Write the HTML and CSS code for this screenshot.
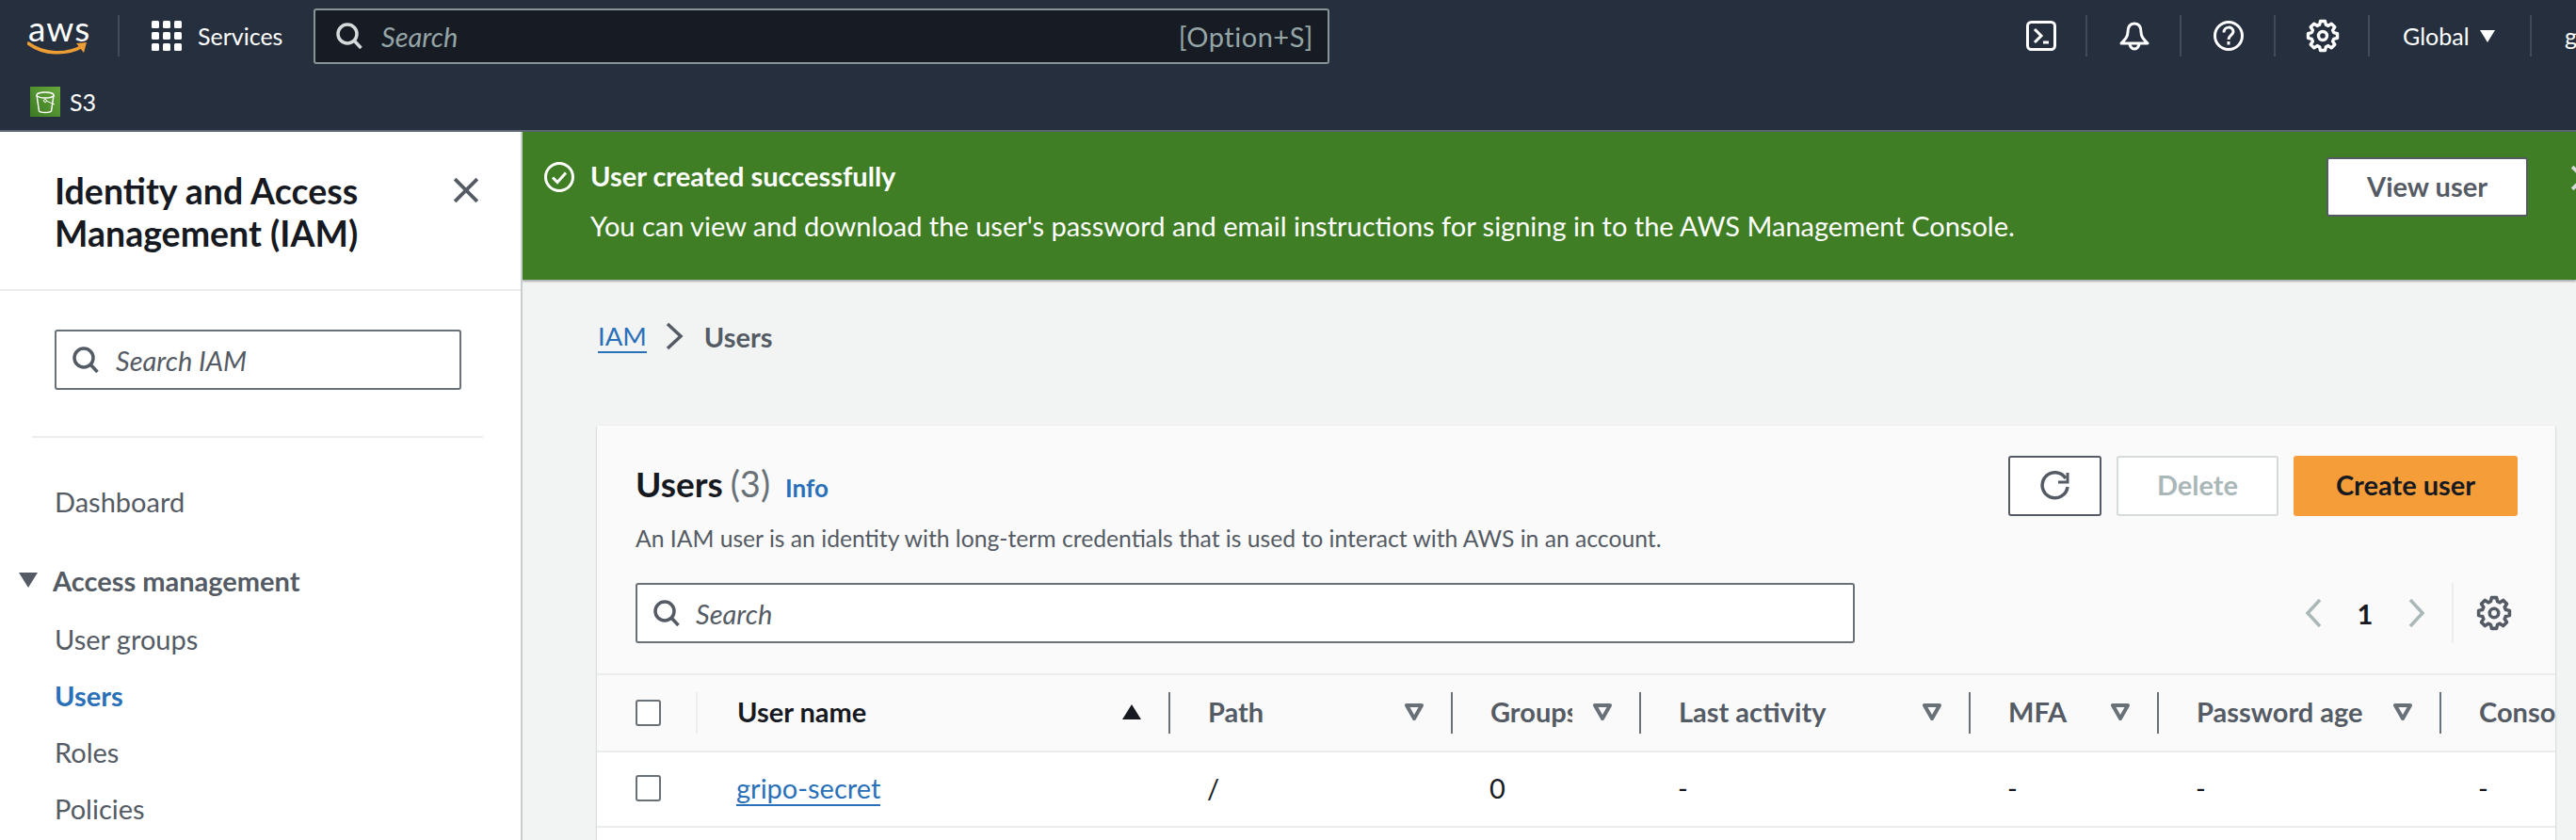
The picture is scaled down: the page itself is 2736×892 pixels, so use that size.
FILE: index.html
```html
<!DOCTYPE html>
<html lang="en">
<head>
    <meta charset="UTF-8">
    <title>Users | IAM</title>
    <link rel="stylesheet" href="styles.css">
</head>
<body>
    <svg class="sprites" width="0" height="0">
        <symbol id="gear" viewBox="0 0 16 16">
            <path d="M6.9 1.1H9.1L9.5 2.8 10.6 3.3 12.1 2.3 13.7 3.9 12.7 5.4 13.2 6.5 14.9 6.9V9.1L13.2 9.5 12.7 10.6 13.7 12.1 12.1 13.7 10.6 12.7 9.5 13.2 9.1 14.9H6.9L6.5 13.2 5.4 12.7 3.9 13.7 2.3 12.1 3.3 10.6 2.8 9.5 1.1 9.1V6.9L2.8 6.5 3.3 5.4 2.3 3.9 3.9 2.3 5.4 3.3 6.5 2.8Z" fill="none" stroke="currentColor" stroke-width="1.5" stroke-linejoin="round"/>
            <circle cx="8" cy="8" r="2" fill="none" stroke="currentColor" stroke-width="1.5"/>
        </symbol>
        <symbol id="search" viewBox="0 0 28 28">
            <circle cx="12" cy="12" r="10" fill="none" stroke="currentColor" stroke-width="3.5"/>
            <path d="M19 19l7.500 8" fill="none" stroke="currentColor" stroke-width="3.5"/>
        </symbol>
        <symbol id="filter" viewBox="0 0 20 18">
            <path d="M2 2h16L10 16z" fill="none" stroke="currentColor" stroke-width="4" stroke-linejoin="round"/>
        </symbol>
    </svg>

    <header class="top-nav">
        <div class="nav-main">
            <a class="aws-logo">
                <span class="aws-word">aws</span>
                <svg class="aws-smile" viewBox="0 0 64 16">
                    <path d="M1 2c16 12 40 13 58 3" fill="none" stroke="#ec9d34" stroke-width="3.5" stroke-linecap="round"/>
                    <path d="M52 2l11-1-3 11z" fill="#ec9d34"/>
                </svg>
            </a>
            <a class="services">
                <svg class="grid-icon" viewBox="0 0 32 32" fill="#fff">
                    <rect x="0" y="0" width="8" height="8" rx="1.5"/><rect x="12" y="0" width="8" height="8" rx="1.5"/><rect x="24" y="0" width="8" height="8" rx="1.5"/>
                    <rect x="0" y="12" width="8" height="8" rx="1.5"/><rect x="12" y="12" width="8" height="8" rx="1.5"/><rect x="24" y="12" width="8" height="8" rx="1.5"/>
                    <rect x="0" y="24" width="8" height="8" rx="1.5"/><rect x="12" y="24" width="8" height="8" rx="1.5"/><rect x="24" y="24" width="8" height="8" rx="1.5"/>
                </svg>
                Services
            </a>
            <div class="nav-search">
                <svg class="nav-search-icon"><use href="#search"/></svg>
                <span class="nav-search-text">Search</span>
                <span class="nav-search-key">[Option+S]</span>
            </div>
            <div class="nav-right">
                <div class="nav-cell nav-first">
                    <svg class="nav-icon" viewBox="0 0 32 32" fill="none" stroke="#fff" stroke-width="3">
                        <rect x="1.5" y="1.5" width="29" height="29" rx="4"/>
                        <path d="M9 9l7 7-7 7M18 23h6"/>
                    </svg>
                </div>
                <div class="nav-cell">
                    <svg class="nav-icon" viewBox="0 0 32 32" fill="none" stroke="#fff" stroke-width="3" stroke-linejoin="round">
                        <path d="M16 3c5 0 7 4 7 9 0 5 3 8 7 12H2c4-4 7-7 7-12 0-5 2-9 7-9z"/>
                        <path d="M11 24a5 6 0 0 0 10 0"/>
                    </svg>
                </div>
                <div class="nav-cell">
                    <svg class="nav-icon" viewBox="0 0 32 32" fill="none" stroke="#fff" stroke-width="3">
                        <circle cx="16" cy="16" r="14.5"/>
                        <path d="M11 12.500c0-7 10-7 10-1 0 4-5 4-5 8.500"/>
                        <path d="M16 22v3.500"/>
                    </svg>
                </div>
                <div class="nav-cell">
                    <svg class="nav-gear"><use href="#gear"/></svg>
                </div>
                <div class="nav-cell nav-region">Global <span class="nav-caret"></span></div>
                <div class="nav-user">gripo</div>
            </div>
        </div>
        <div class="nav-sub">
            <svg class="s3-icon" viewBox="0 0 32 32">
                <defs>
                    <linearGradient id="s3bg" x1="0" y1="1" x2="1" y2="0">
                        <stop offset="0" stop-color="#3b7a22"/>
                        <stop offset="1" stop-color="#68a83c"/>
                    </linearGradient>
                </defs>
                <rect width="32" height="32" fill="url(#s3bg)"/>
                <path d="M7 9l2.500 17c2 2 11 2 13 0L25 9" fill="none" stroke="#fff" stroke-width="1.500"/>
                <ellipse cx="16" cy="9" rx="9" ry="3" fill="none" stroke="#fff" stroke-width="1.500"/>
                <circle cx="16" cy="15" r="1.500" fill="none" stroke="#fff"/>
                <path d="M17 15l9 4" stroke="#fff" fill="none"/>
            </svg>
            <span>S3</span>
        </div>
    </header>

    <div class="layout">
        <aside class="sidebar">
            <div class="side-head">
                <h2>Identity and Access Management (IAM)</h2>
                <svg class="side-close" viewBox="0 0 26 26" fill="none" stroke="#545b64" stroke-width="3.500">
                    <path d="M2 2l22 22M24 2L2 24"/>
                </svg>
            </div>
            <div class="side-search-wrap">
                <div class="field side-field">
                    <svg class="field-icon"><use href="#search"/></svg>
                    <span>Search IAM</span>
                </div>
            </div>
            <nav class="side-nav">
                <a class="side-link side-dash">Dashboard</a>
                <div class="side-group"><span class="side-caret"></span>Access management</div>
                <a class="side-link">User groups</a>
                <a class="side-link active">Users</a>
                <a class="side-link">Roles</a>
                <a class="side-link">Policies</a>
            </nav>
        </aside>

        <main class="main">
            <div class="flash">
                <svg class="flash-icon" viewBox="0 0 32 32" fill="none" stroke="#fff" stroke-width="3">
                    <circle cx="16" cy="16" r="14.500"/>
                    <path d="M9 16.500l5 5 9-10"/>
                </svg>
                <div class="flash-body">
                    <div class="flash-title">User created successfully</div>
                    <div class="flash-text">You can view and download the user's password and email instructions for signing in to the AWS Management Console.</div>
                </div>
                <button class="btn flash-btn">View user</button>
                <svg class="flash-close" viewBox="0 0 26 26" fill="none" stroke="#d5dbdb" stroke-width="3.500">
                    <path d="M2 2l22 22M24 2L2 24"/>
                </svg>
            </div>

            <div class="crumbs">
                <a class="crumb-link">IAM</a>
                <svg class="crumb-sep" viewBox="0 0 20 30" fill="none" stroke="#545b64" stroke-width="3.500">
                    <path d="M3 2l14 13L3 28"/>
                </svg>
                <span class="crumb-now">Users</span>
            </div>

            <section class="card">
                <div class="card-head">
                    <div class="card-title-wrap">
                        <div class="card-title">
                            <h1>Users</h1>
                            <span class="card-count">(3)</span>
                            <a class="info-link">Info</a>
                        </div>
                        <p class="card-desc">An IAM user is an identity with long-term credentials that is used to interact with AWS in an account.</p>
                    </div>
                    <div class="card-actions">
                        <button class="btn btn-refresh">
                            <svg viewBox="0 0 32 32" width="32" height="32" fill="none" stroke="#545b64" stroke-width="3.500">
                                <path d="M27 8A13.500 13.500 0 1 0 29 17"/>
                                <path d="M29 2v10H19" stroke-width="3"/>
                            </svg>
                        </button>
                        <button class="btn btn-disabled">Delete</button>
                        <button class="btn btn-primary">Create user</button>
                    </div>
                </div>

                <div class="card-tools">
                    <div class="field table-field">
                        <svg class="field-icon"><use href="#search"/></svg>
                        <span>Search</span>
                    </div>
                    <div class="pager">
                        <svg class="pager-arrow" viewBox="0 0 18 30"><path d="M16 1L3 15l13 14"/></svg>
                        <span class="pager-num">1</span>
                        <svg class="pager-arrow" viewBox="0 0 18 30"><path d="M2 1l13 14L2 29"/></svg>
                    </div>
                    <div class="prefs">
                        <svg class="prefs-gear"><use href="#gear"/></svg>
                    </div>
                </div>

                <div class="table">
                    <div class="row head">
                        <div class="cell c-check"><span class="th th-light"><span class="check"></span></span></div>
                        <div class="cell c-name"><span class="th th-sorted">User name<span class="sort-up"></span></span></div>
                        <div class="cell c-path"><span class="th">Path<svg class="filter"><use href="#filter"/></svg></span></div>
                        <div class="cell c-groups"><span class="th"><span class="clip">Groups</span><svg class="filter"><use href="#filter"/></svg></span></div>
                        <div class="cell c-activity"><span class="th">Last activity<svg class="filter"><use href="#filter"/></svg></span></div>
                        <div class="cell c-mfa"><span class="th">MFA<svg class="filter"><use href="#filter"/></svg></span></div>
                        <div class="cell c-age"><span class="th">Password age<svg class="filter"><use href="#filter"/></svg></span></div>
                        <div class="cell c-console"><span class="th th-last">Console last sign-in</span></div>
                    </div>
                    <div class="row body">
                        <div class="cell c-check"><span class="check"></span></div>
                        <div class="cell c-name"><a class="user-link">gripo-secret</a></div>
                        <div class="cell c-path">/</div>
                        <div class="cell c-groups">0</div>
                        <div class="cell c-activity">-</div>
                        <div class="cell c-mfa">-</div>
                        <div class="cell c-age">-</div>
                        <div class="cell c-console">-</div>
                    </div>
                    <div class="row body"></div>
                </div>
            </section>
        </main>
    </div>
</body>
</html>
```

FILE: styles.css
```css
* {
    box-sizing: border-box;
}
html, body {
    height: 892px;
    overflow: hidden;
}
body {
    margin: 0;
    font-family: Lato, "Noto Sans", sans-serif;
    font-size: 29px;
    color: #16191f;
    background: #f2f3f3;
}
a {
    text-decoration: none;
}
h1, h2, p {
    margin: 0;
}
button {
    font-family: inherit;
}
.sprites {
    position: absolute;
}

/* top navigation */
.top-nav {
    height: 140px;
    background: #252f3e;
    border-bottom: 2px solid #5a6471;
    color: #fff;
}
.nav-main {
    display: flex;
    align-items: center;
    height: 76px;
    padding: 0 0 0 29px;
}
.aws-logo {
    display: block;
    width: 98px;
    height: 44px;
    margin-top: -1px;
    border-right: 2px solid #414b5a;
}
.aws-word {
    display: block;
    font-size: 37px;
    line-height: 28px;
    letter-spacing: 1px;
    padding-left: 1px;
}
.aws-smile {
    display: block;
    width: 64px;
    height: 16px;
}
.services {
    display: flex;
    align-items: center;
    gap: 17px;
    width: 206px;
    padding-left: 34px;
    font-size: 25px;
}
.grid-icon {
    width: 32px;
    height: 32px;
}
.nav-search {
    display: flex;
    align-items: center;
    width: 1079px;
    height: 59px;
    padding: 0 15px 0 22px;
    background: #161b24;
    border: 2px solid #879596;
    border-radius: 3px;
}
.nav-search-icon {
    width: 28px;
    height: 28px;
    color: #d5dbdb;
}
.nav-search-text {
    margin-left: 20px;
    font-style: italic;
    color: #95a5a6;
}
.nav-search-key {
    margin-left: auto;
    color: #95a5a6;
    letter-spacing: .5px;
}
.nav-right {
    display: flex;
    align-items: center;
    margin-left: auto;
}
.nav-cell {
    display: flex;
    align-items: center;
    justify-content: center;
    width: 100px;
    height: 44px;
    padding-left: 2px;
    border-right: 2px solid #414b5a;
}
.nav-first {
    width: 99px;
}
.nav-icon {
    width: 32px;
    height: 32px;
}
.nav-gear {
    width: 36px;
    height: 36px;
    color: #fff;
}
.nav-region {
    width: 172px;
    justify-content: flex-start;
    padding-left: 35px;
    font-size: 25px;
    gap: 11px;
}
.nav-caret {
    width: 0;
    height: 0;
    border-left: 8px solid transparent;
    border-right: 8px solid transparent;
    border-top: 13px solid #fff;
}
.nav-user {
    width: 47px;
    padding-left: 35px;
    overflow: hidden;
    font-size: 25px;
}
.nav-sub {
    display: flex;
    align-items: center;
    gap: 10px;
    height: 62px;
    padding: 2px 0 0 32px;
    font-size: 25px;
}
.s3-icon {
    width: 32px;
    height: 32px;
}

/* layout */
.layout {
    display: flex;
    height: 752px;
}
.sidebar {
    flex: 0 0 555px;
    background: #fff;
    border-right: 2px solid #c9cccc;
}
.main {
    flex: 1;
    min-width: 0;
    overflow: hidden;
}

/* side navigation */
.side-head {
    display: flex;
    justify-content: space-between;
    height: 169px;
    padding: 40px 44px 0 58px;
    border-bottom: 2px solid #eaeded;
}
.side-head h2 {
    width: 370px;
    font-size: 37.5px;
    font-weight: 700;
    line-height: 45px;
}
.side-close {
    width: 28px;
    height: 28px;
    margin-top: 8px;
}
.side-search-wrap {
    margin: 0 40px 0 34px;
    padding: 41px 0 49px 24px;
    border-bottom: 2px solid #eaeded;
}
.field {
    display: flex;
    align-items: center;
    background: #fff;
    border: 2px solid #687078;
    border-radius: 3px;
    color: #545b64;
    font-style: italic;
}
.field-icon {
    width: 28px;
    height: 28px;
    flex: none;
    color: #545b64;
}
.side-field {
    width: 432px;
    height: 64px;
    padding-left: 17px;
    gap: 18px;
}
.side-nav {
    padding-top: 38px;
}
.side-link {
    display: block;
    height: 60px;
    line-height: 60px;
    padding-left: 58px;
    color: #545b64;
}
.side-dash {
    margin-bottom: 23px;
}
.side-link.active {
    color: #2a70b8;
    font-weight: 700;
}
.side-group {
    display: flex;
    align-items: center;
    height: 60px;
    margin-bottom: 3px;
    padding-left: 20px;
    gap: 16px;
    color: #545b64;
    font-weight: 700;
}
.side-caret {
    width: 0;
    height: 0;
    border-left: 10px solid transparent;
    border-right: 10px solid transparent;
    border-top: 16px solid #545b64;
}

/* flash banner */
.flash {
    display: flex;
    height: 157px;
    padding: 32px 0 0 23px;
    background: #3f7e25;
    color: #fff;
    box-shadow: 0 2px 2px rgba(0,0,0,.3);
    overflow: hidden;
}
.flash-icon {
    width: 32px;
    height: 32px;
    flex: none;
}
.flash-body {
    flex: 1;
    margin: -2px 0 0 17px;
}
.flash-title {
    font-weight: 700;
    line-height: 34px;
}
.flash-text {
    margin-top: 18px;
    line-height: 36px;
}
.btn {
    height: 64px;
    padding-bottom: 4px;
    border-radius: 3px;
    font-size: 29px;
    font-weight: 700;
    cursor: pointer;
}
.flash-btn {
    flex: none;
    width: 214px;
    height: 63px;
    margin-top: -5px;
    background: #fff;
    border: 2px solid #545b64;
    color: #545b64;
}
.flash-close {
    flex: none;
    width: 28px;
    height: 28px;
    margin: 3px -22px 0 45px;
}

/* breadcrumbs */
.crumbs {
    display: flex;
    align-items: center;
    height: 155px;
    padding: 0 0 35px 80px;
}
.crumb-link {
    font-size: 27.5px;
    color: #2a70b8;
    border-bottom: 2px solid #2a70b8;
}
.crumb-sep {
    width: 20px;
    height: 30px;
    margin: 0 22px 0 19px;
}
.crumb-now {
    color: #545b64;
    font-weight: 700;
}

/* users card */
.card {
    margin: 0 22px 0 79px;
    height: 460px;
    background: #fafafa;
    box-shadow: 0 1px 2px rgba(0,0,0,.28);
}
.card-head {
    display: flex;
    justify-content: space-between;
    height: 168px;
    padding: 32px 40px 0 41px;
}
.card-title-wrap {
    padding-top: 6px;
}
.card-title {
    display: flex;
    align-items: baseline;
}
.card-title h1 {
    font-size: 37px;
    font-weight: 700;
}
.card-count {
    margin-left: 8px;
    font-size: 38px;
    color: #687078;
}
.info-link {
    margin-left: 16px;
    font-size: 26px;
    font-weight: 700;
    color: #2a70b8;
}
.card-desc {
    margin-top: 21px;
    color: #545b64;
    font-size: 24.7px;
}
.card-actions {
    display: flex;
    gap: 16px;
    height: 64px;
}
.btn-refresh {
    display: flex;
    align-items: center;
    justify-content: center;
    width: 99px;
    padding: 0;
    background: #fff;
    border: 2px solid #545b64;
}
.btn-disabled {
    width: 172px;
    background: #fff;
    border: 2px solid #d5dbdb;
    color: #aab7b8;
}
.btn-primary {
    width: 238px;
    background: #f49d39;
    border: none;
    color: #16191f;
}
.card-tools {
    display: flex;
    align-items: center;
    height: 97px;
    padding: 0 0 33px 41px;
    border-bottom: 2px solid #eaeded;
}
.table-field {
    width: 1295px;
    height: 64px;
    padding-left: 17px;
    gap: 17px;
}
.pager {
    display: flex;
    align-items: center;
    margin-left: 478px;
}
.pager-arrow {
    width: 18px;
    height: 30px;
    fill: none;
    stroke: #aab7b8;
    stroke-width: 3.5;
}
.pager-num {
    width: 92px;
    text-align: center;
    font-weight: 700;
}
.prefs {
    display: flex;
    align-items: center;
    height: 64px;
    margin-left: 28px;
    padding-left: 24px;
    border-left: 2px solid #eaeded;
}
.prefs-gear {
    width: 38px;
    height: 38px;
    color: #545b64;
}

/* table */
.table {
    overflow: hidden;
}
.row {
    display: grid;
    grid-template-columns: 109px 500px 300px 200px 350px 200px 300px 300px;
    width: 2359px;
}
.head {
    height: 82px;
    border-bottom: 2px solid #eaeded;
    align-items: center;
    font-weight: 700;
    color: #545b64;
}
.body {
    height: 80px;
    padding-bottom: 3px;
    background: #fff;
    border-bottom: 2px solid #eaeded;
    align-items: center;
}
.row.body:last-child {
    height: 40px;
    border: 0;
}
.cell {
    padding-left: 39px;
    min-width: 0;
}
.c-check {
    padding-left: 41px;
}
.head .cell {
    padding-left: 0;
}
.head .cell:nth-child(n+2) .th {
    padding-left: 40px;
}
.th {
    display: flex;
    align-items: center;
    justify-content: space-between;
    height: 44px;
    padding: 0 29px 3px 0;
    border-right: 2px solid #687078;
    white-space: nowrap;
}
.th-light {
    width: 107px;
    padding-left: 41px;
    padding-bottom: 0;
    border-right-color: #eaeded;
}
.th-sorted {
    color: #16191f;
}
.th-last {
    border: 0;
    padding-right: 0;
}
.clip {
    width: 87px;
    overflow: hidden;
}
.check {
    display: block;
    width: 27px;
    height: 28px;
    background: #fff;
    border: 2px solid #687078;
    border-radius: 3px;
}
.filter {
    width: 20px;
    height: 18px;
    color: #687078;
    flex: none;
}
.sort-up {
    width: 0;
    height: 0;
    border-left: 10px solid transparent;
    border-right: 10px solid transparent;
    border-bottom: 16px solid #16191f;
}
.user-link {
    color: #2a70b8;
    border-bottom: 2px solid #2a70b8;
}
```
